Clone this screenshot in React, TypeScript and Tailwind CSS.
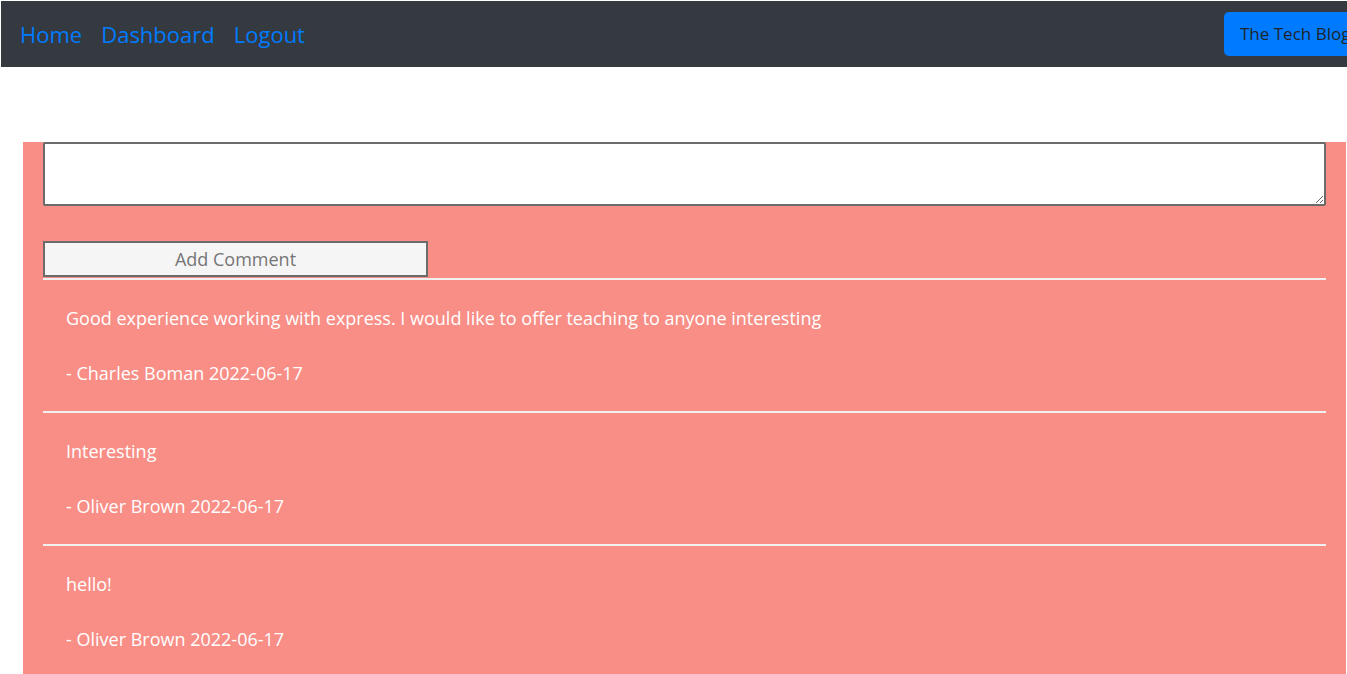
const comments = [
  { text: 'Good experience working with express. I would like to offer teaching to anyone interesting', author: 'Charles Boman', date: '2022-06-17' },
  { text: 'Interesting', author: 'Oliver Brown', date: '2022-06-17' },
  { text: 'hello!', author: 'Oliver Brown', date: '2022-06-17' },
];

export default function App() {
  return (
    <div className="w-[1347px] h-[674px] overflow-hidden bg-white pt-px pl-px font-['Open_Sans',sans-serif]">
      {/* Navbar */}
      <nav className="flex items-center justify-between w-[1420px] h-[66px] bg-[#343a40] pl-[19px]">
        <div className="flex items-center gap-[19px] text-[22px] text-[#007bff]">
          <a href="#">Home</a>
          <a href="#">Dashboard</a>
          <a href="#">Logout</a>
        </div>
        <button className="h-[44px] w-[197px] rounded-[5px] bg-[#007bff] pl-[16px] text-left text-[17px] text-[#212529]">
          The Tech Blog
        </button>
      </nav>

      {/* Comment section */}
      <div className="mt-[75px] ml-[22px] w-[1323px] bg-[#f88e86] px-[20px] pb-[40px]">
        <textarea className="block w-full h-[64px] border-2 border-[#6b6b6b] bg-white rounded-[2px]" />
        <button className="mt-[35px] block w-[385px] h-[36px] border-2 border-[#6b6b6b] bg-[#f5f5f5] text-[18px] text-[#757575]">
          Add Comment
        </button>
        {comments.map((c, i) => (
          <div key={i}>
            <hr className={`border-0 h-[2px] bg-[#f0f0f0] ${i === 0 ? 'mt-px' : ''}`} />
            <div className="px-[23px] pt-[26px] pb-[26px] text-[18px] leading-[24px] text-white">
              <p>{c.text}</p>
              <p className="mt-[31px]">- {c.author} {c.date}</p>
            </div>
          </div>
        ))}
      </div>
    </div>
  );
}
